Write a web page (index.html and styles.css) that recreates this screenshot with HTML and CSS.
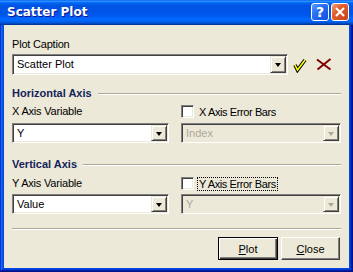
FILE: index.html
```html
<!DOCTYPE html>
<html lang="en">
<head>
    <meta charset="UTF-8">
    <title>Scatter Plot</title>
    <link rel="stylesheet" href="styles.css">
</head>
<body>
    <div class="window">
        <div class="titlebar">
            <span class="title">Scatter Plot</span>
            <div class="caption-buttons">
                <span class="cap-btn help">?</span>
                <span class="cap-btn close">
                    <svg width="12" height="12" viewBox="0 0 12 12"><path d="M2 2 L10 10 M10 2 L2 10" stroke="#fff" stroke-width="2" fill="none"/></svg>
                </span>
            </div>
        </div>

        <div class="client">
            <div class="label">Plot Caption</div>
            <div class="caption-row">
                <div class="combo caption-combo">
                    <span class="value">Scatter Plot</span>
                    <span class="drop"><span class="arrow"></span></span>
                </div>
                <svg class="ok-icon" width="16" height="16" viewBox="0 0 16 16">
                    <path d="M3 8 L5.5 13 L13 3" stroke="#000" stroke-width="3.6" fill="none" stroke-linejoin="miter"/>
                    <path d="M3 8 L5.5 13 L13 3" stroke="#ffff00" stroke-width="1.6" fill="none" stroke-linejoin="miter"/>
                </svg>
                <svg class="cancel-icon" width="16" height="13" viewBox="0 0 16 13">
                    <path d="M1 1.5 L14.5 11.5 M14.5 1 L1.5 11.5" stroke="#800000" stroke-width="2" fill="none"/>
                </svg>
            </div>

            <div class="group-title first">Horizontal Axis</div>
            <div class="axis-row">
                <div class="col">
                    <div class="label">X Axis Variable</div>
                    <div class="combo">
                        <span class="value">Y</span>
                        <span class="drop"><span class="arrow"></span></span>
                    </div>
                </div>
                <div class="col">
                    <div class="check">
                        <span class="box"></span>
                        <span class="check-text">X Axis Error Bars</span>
                    </div>
                    <div class="combo disabled">
                        <span class="value">Index</span>
                        <span class="drop"><span class="arrow"></span></span>
                    </div>
                </div>
            </div>

            <div class="group-title second">Vertical Axis</div>
            <div class="axis-row y-row">
                <div class="col">
                    <div class="label">Y Axis Variable</div>
                    <div class="combo">
                        <span class="value">Value</span>
                        <span class="drop"><span class="arrow"></span></span>
                    </div>
                </div>
                <div class="col">
                    <div class="check">
                        <span class="box"></span>
                        <span class="check-text focused">Y Axis Error Bars</span>
                    </div>
                    <div class="combo disabled">
                        <span class="value">Y</span>
                        <span class="drop"><span class="arrow"></span></span>
                    </div>
                </div>
            </div>

            <div class="separator"></div>

            <div class="buttons">
                <button class="btn default"><u>P</u>lot</button>
                <button class="btn"><u>C</u>lose</button>
            </div>
        </div>
    </div>
</body>
</html>
```

FILE: styles.css
```css
body {
    margin: 0;
    width: 353px;
    height: 272px;
    overflow: hidden;
    font-family: "Liberation Sans", Arial, sans-serif;
    font-size: 11px;
}

.window {
    display: flex;
    flex-direction: column;
    width: 353px;
    height: 272px;
    box-sizing: border-box;
    background: #0846e0;
    box-shadow: inset -1px -1px #00138c, inset 1px 1px #0831d9, inset -2px -2px #001ea0, inset 2px 2px #166aee, inset -3px -3px #003bda, inset 3px 3px #0855dd;
}

.titlebar {
    display: flex;
    align-items: center;
    justify-content: space-between;
    height: 25px;
    padding: 0 4px 0 7px;
    background: linear-gradient(to bottom, #0058ee 0%, #3593ff 4%, #288eff 6%, #127dff 8%, #036ffc 10%, #0262ee 14%, #0057e5 20%, #0054e3 24%, #0055eb 56%, #005bf5 66%, #026afe 76%, #0062ef 86%, #0052d6 92%, #0040ab 96%, #003092 100%);
}

.title {
    color: #ffffff;
    font-family: "DejaVu Sans", sans-serif;
    font-weight: bold;
    font-size: 12px;
    text-shadow: 1px 1px #0f1089;
    margin-top: -1px;
}

.caption-buttons {
    display: flex;
    gap: 2px;
    margin-top: -2px;
}

.cap-btn {
    display: flex;
    align-items: center;
    justify-content: center;
    width: 16px;
    height: 16px;
    border: 1px solid #ffffff;
    border-radius: 3px;
    color: #ffffff;
    font-family: "DejaVu Sans", sans-serif;
    font-weight: bold;
    font-size: 14px;
}

.help {
    background: linear-gradient(135deg, #5a9cff 0%, #2a6ff0 40%, #1050e0 100%);
}

.close {
    background: linear-gradient(135deg, #f0a080 0%, #e2622e 35%, #c9431a 100%);
}

.client {
    flex: 1;
    margin: 0 4px 4px 4px;
    padding: 13px 8px 0 8px;
    background: #ece9d8;
    color: #000000;
}

.label {
    height: 13px;
    line-height: 13px;
    letter-spacing: -0.2px;
}

.caption-row {
    display: flex;
    align-items: center;
    margin-top: 3px;
}

.combo {
    position: relative;
    display: flex;
    align-items: center;
    height: 20px;
    box-sizing: border-box;
    background: #ffffff;
    border: 1px solid;
    border-color: #808080 #ffffff #ffffff #808080;
    box-shadow: inset 1px 1px #404040, inset -1px -1px #ece9d8;
    padding: 1px 1px 1px 4px;
}

.caption-combo {
    width: 276px;
    height: 21px;
}

.combo .value {
    flex: 1;
    line-height: 13px;
}

.drop {
    display: flex;
    align-items: center;
    justify-content: center;
    width: 16px;
    align-self: stretch;
    box-sizing: border-box;
    background: #ece9d8;
    border: 1px solid;
    border-color: #ece9d8 #404040 #404040 #ece9d8;
    box-shadow: inset 1px 1px #ffffff, inset -1px -1px #808080;
}

.arrow {
    width: 0;
    height: 0;
    border-left: 3.5px solid transparent;
    border-right: 3.5px solid transparent;
    border-top: 4px solid #000000;
    margin-top: 1px;
}

.combo.disabled {
    background: #ece9d8;
    color: #aca899;
}

.combo.disabled .arrow {
    border-top-color: #aca899;
}

.ok-icon {
    margin-left: 4px;
    margin-top: 1px;
}

.cancel-icon {
    margin-left: 8px;
}

.group-title {
    display: flex;
    align-items: center;
    gap: 6px;
    height: 13px;
    line-height: 13px;
    font-weight: bold;
    color: #14235a;
}

.group-title::after {
    content: "";
    flex: 1;
    border-top: 1px solid #aca899;
    border-bottom: 1px solid #ffffff;
}

.group-title.first {
    margin-top: 12px;
}

.group-title.second {
    margin-top: 15px;
}

.axis-row {
    display: grid;
    grid-template-columns: 157px 1fr;
    column-gap: 12px;
    margin-top: 5px;
}

.axis-row .combo {
    margin-top: 5px;
}

.y-row {
    margin-top: 6px;
}

.y-row .combo {
    margin-top: 4px;
}

.check {
    display: flex;
    align-items: center;
    height: 13px;
}

.box {
    width: 13px;
    height: 13px;
    box-sizing: border-box;
    background: #ffffff;
    border: 1px solid;
    border-color: #808080 #ffffff #ffffff #808080;
    box-shadow: inset 1px 1px #404040, inset -1px -1px #ece9d8;
    margin-right: 3px;
}

.check-text {
    padding: 0 1px;
    line-height: 12px;
    letter-spacing: -0.4px;
    border: 1px dotted transparent;
}

.check-text.focused {
    border-color: #000000;
}

.separator {
    margin-top: 14px;
    border-top: 1px solid #aca899;
    border-bottom: 1px solid #ffffff;
}

.buttons {
    display: flex;
    justify-content: flex-end;
    gap: 3px;
    margin-top: 7px;
    padding-right: 1px;
}

.btn {
    width: 59px;
    height: 23px;
    padding: 0;
    font-family: "Liberation Sans", Arial, sans-serif;
    font-size: 11px;
    color: #000000;
    background: #ece9d8;
    border: 1px solid;
    border-color: #ffffff #404040 #404040 #ffffff;
    box-shadow: inset -1px -1px #808080;
}

.btn.default {
    width: 60px;
    border: 1px solid #000000;
    box-shadow: inset 1px 1px #ffffff, inset -1px -1px #404040, inset -2px -2px #808080;
}
```
